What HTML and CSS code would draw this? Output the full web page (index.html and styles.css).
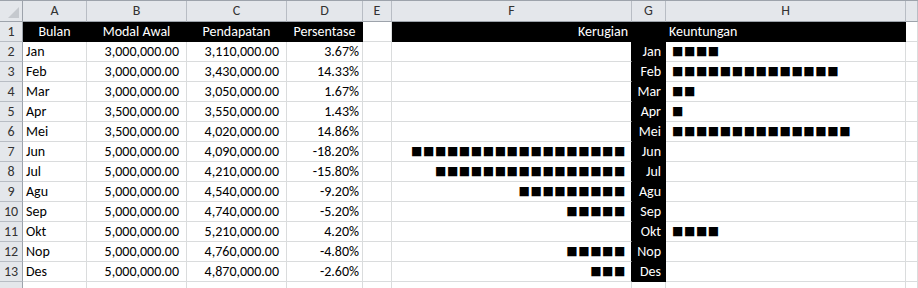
FILE: index.html
```html
<!DOCTYPE html>
<html lang="id">
<head>
    <meta charset="UTF-8">
    <title>Laba Rugi Bulanan</title>
    <link rel="stylesheet" href="styles.css">
</head>
<body>
    <div class="sheet">
        <!-- column letters -->
        <div class="corner"><span class="tri"></span></div>
        <div class="colhead">A</div>
        <div class="colhead">B</div>
        <div class="colhead">C</div>
        <div class="colhead">D</div>
        <div class="colhead">E</div>
        <div class="colhead">F</div>
        <div class="colhead">G</div>
        <div class="colhead">H</div>
        <div class="colhead"></div>

        <!-- row 1: headings -->
        <div class="rowhead">1</div>
        <div class="cell dark center">Bulan</div>
        <div class="cell dark center">Modal Awal</div>
        <div class="cell dark center">Pendapatan</div>
        <div class="cell dark center">Persentase</div>
        <div class="cell"></div>
        <div class="cell dark right">Kerugian</div>
        <div class="cell dark"></div>
        <div class="cell dark">Keuntungan</div>
        <div class="cell"></div>

        <div class="rowhead">2</div>
        <div class="cell">Jan</div>
        <div class="cell num">3,000,000.00</div>
        <div class="cell num">3,110,000.00</div>
        <div class="cell right">3.67%</div>
        <div class="cell"></div>
        <div class="cell loss"></div>
        <div class="cell month">Jan</div>
        <div class="cell gain">■■■■</div>
        <div class="cell"></div>

        <div class="rowhead">3</div>
        <div class="cell">Feb</div>
        <div class="cell num">3,000,000.00</div>
        <div class="cell num">3,430,000.00</div>
        <div class="cell right">14.33%</div>
        <div class="cell"></div>
        <div class="cell loss"></div>
        <div class="cell month">Feb</div>
        <div class="cell gain">■■■■■■■■■■■■■■</div>
        <div class="cell"></div>

        <div class="rowhead">4</div>
        <div class="cell">Mar</div>
        <div class="cell num">3,000,000.00</div>
        <div class="cell num">3,050,000.00</div>
        <div class="cell right">1.67%</div>
        <div class="cell"></div>
        <div class="cell loss"></div>
        <div class="cell month">Mar</div>
        <div class="cell gain">■■</div>
        <div class="cell"></div>

        <div class="rowhead">5</div>
        <div class="cell">Apr</div>
        <div class="cell num">3,500,000.00</div>
        <div class="cell num">3,550,000.00</div>
        <div class="cell right">1.43%</div>
        <div class="cell"></div>
        <div class="cell loss"></div>
        <div class="cell month">Apr</div>
        <div class="cell gain">■</div>
        <div class="cell"></div>

        <div class="rowhead">6</div>
        <div class="cell">Mei</div>
        <div class="cell num">3,500,000.00</div>
        <div class="cell num">4,020,000.00</div>
        <div class="cell right">14.86%</div>
        <div class="cell"></div>
        <div class="cell loss"></div>
        <div class="cell month">Mei</div>
        <div class="cell gain">■■■■■■■■■■■■■■■</div>
        <div class="cell"></div>

        <div class="rowhead">7</div>
        <div class="cell">Jun</div>
        <div class="cell num">5,000,000.00</div>
        <div class="cell num">4,090,000.00</div>
        <div class="cell right">-18.20%</div>
        <div class="cell"></div>
        <div class="cell loss">■■■■■■■■■■■■■■■■■■</div>
        <div class="cell month">Jun</div>
        <div class="cell gain"></div>
        <div class="cell"></div>

        <div class="rowhead">8</div>
        <div class="cell">Jul</div>
        <div class="cell num">5,000,000.00</div>
        <div class="cell num">4,210,000.00</div>
        <div class="cell right">-15.80%</div>
        <div class="cell"></div>
        <div class="cell loss">■■■■■■■■■■■■■■■■</div>
        <div class="cell month">Jul</div>
        <div class="cell gain"></div>
        <div class="cell"></div>

        <div class="rowhead">9</div>
        <div class="cell">Agu</div>
        <div class="cell num">5,000,000.00</div>
        <div class="cell num">4,540,000.00</div>
        <div class="cell right">-9.20%</div>
        <div class="cell"></div>
        <div class="cell loss">■■■■■■■■■</div>
        <div class="cell month">Agu</div>
        <div class="cell gain"></div>
        <div class="cell"></div>

        <div class="rowhead">10</div>
        <div class="cell">Sep</div>
        <div class="cell num">5,000,000.00</div>
        <div class="cell num">4,740,000.00</div>
        <div class="cell right">-5.20%</div>
        <div class="cell"></div>
        <div class="cell loss">■■■■■</div>
        <div class="cell month">Sep</div>
        <div class="cell gain"></div>
        <div class="cell"></div>

        <div class="rowhead">11</div>
        <div class="cell">Okt</div>
        <div class="cell num">5,000,000.00</div>
        <div class="cell num">5,210,000.00</div>
        <div class="cell right">4.20%</div>
        <div class="cell"></div>
        <div class="cell loss"></div>
        <div class="cell month">Okt</div>
        <div class="cell gain">■■■■</div>
        <div class="cell"></div>

        <div class="rowhead">12</div>
        <div class="cell">Nop</div>
        <div class="cell num">5,000,000.00</div>
        <div class="cell num">4,760,000.00</div>
        <div class="cell right">-4.80%</div>
        <div class="cell"></div>
        <div class="cell loss">■■■■■</div>
        <div class="cell month">Nop</div>
        <div class="cell gain"></div>
        <div class="cell"></div>

        <div class="rowhead">13</div>
        <div class="cell">Des</div>
        <div class="cell num">5,000,000.00</div>
        <div class="cell num">4,870,000.00</div>
        <div class="cell right">-2.60%</div>
        <div class="cell"></div>
        <div class="cell loss">■■■</div>
        <div class="cell month">Des</div>
        <div class="cell gain"></div>
        <div class="cell"></div>

        <!-- row 14, cut off at the bottom -->
        <div class="rowhead"></div>
        <div class="cell"></div>
        <div class="cell"></div>
        <div class="cell"></div>
        <div class="cell"></div>
        <div class="cell"></div>
        <div class="cell"></div>
        <div class="cell"></div>
        <div class="cell"></div>
        <div class="cell"></div>
    </div>
</body>
</html>
```

FILE: styles.css
```css
body {
    margin: 0;
    background: #fff;
    font-family: "Carlito", "Lato", sans-serif;
    font-size: 13px;
    color: #000;
}

.sheet {
    display: grid;
    grid-template-columns: 23px 64px 100px 100px 76px 29px 240px 34px 240px 1fr;
    grid-template-rows: 21px repeat(13, 20px) 20px;
    height: 288px;
    overflow: hidden;
    border-top: 1px solid #9da3ab;
    box-sizing: border-box;
}

/* headers */
.corner,
.colhead,
.rowhead {
    background: #e4e7eb;
    color: #333;
    box-sizing: border-box;
    border-right: 1px solid #b8bdc4;
    border-bottom: 1px solid #b8bdc4;
    text-align: center;
    font-size: 14px;
}
.colhead {
    line-height: 19px;
    border-bottom-color: #9da3ab;
}
.rowhead {
    line-height: 19px;
    border-right-color: #9da3ab;
}
.corner {
    position: relative;
    border-bottom-color: #9da3ab;
    border-right-color: #9da3ab;
}
.corner .tri {
    position: absolute;
    right: 3px;
    bottom: 3px;
    width: 0;
    height: 0;
    border-left: 11px solid transparent;
    border-bottom: 11px solid #c5c9ce;
}

/* cells */
.cell {
    box-sizing: border-box;
    border-right: 1px solid #dadcdd;
    border-bottom: 1px solid #dadcdd;
    padding: 0 3px;
    line-height: 19px;
    white-space: nowrap;
    overflow: hidden;
    font-size: 14px;
}
.center { text-align: center; }
.right { text-align: right; }
.num {
    text-align: right;
    padding-right: 7px;
}
.dark {
    background: #000;
    color: #fff;
    border-color: #000;
}

/* chart columns */
.loss {
    text-align: right;
    padding-right: 5px;
    border-right-color: #000;
}
.month {
    background: #000;
    color: #fff;
    border-color: #000;
    text-align: right;
    padding-right: 4px;
}
.loss,
.gain {
    font-family: "DejaVu Sans", sans-serif;
    font-size: 12px;
    letter-spacing: 0.6px;
}
.gain {
    padding-left: 6px;
}
```
